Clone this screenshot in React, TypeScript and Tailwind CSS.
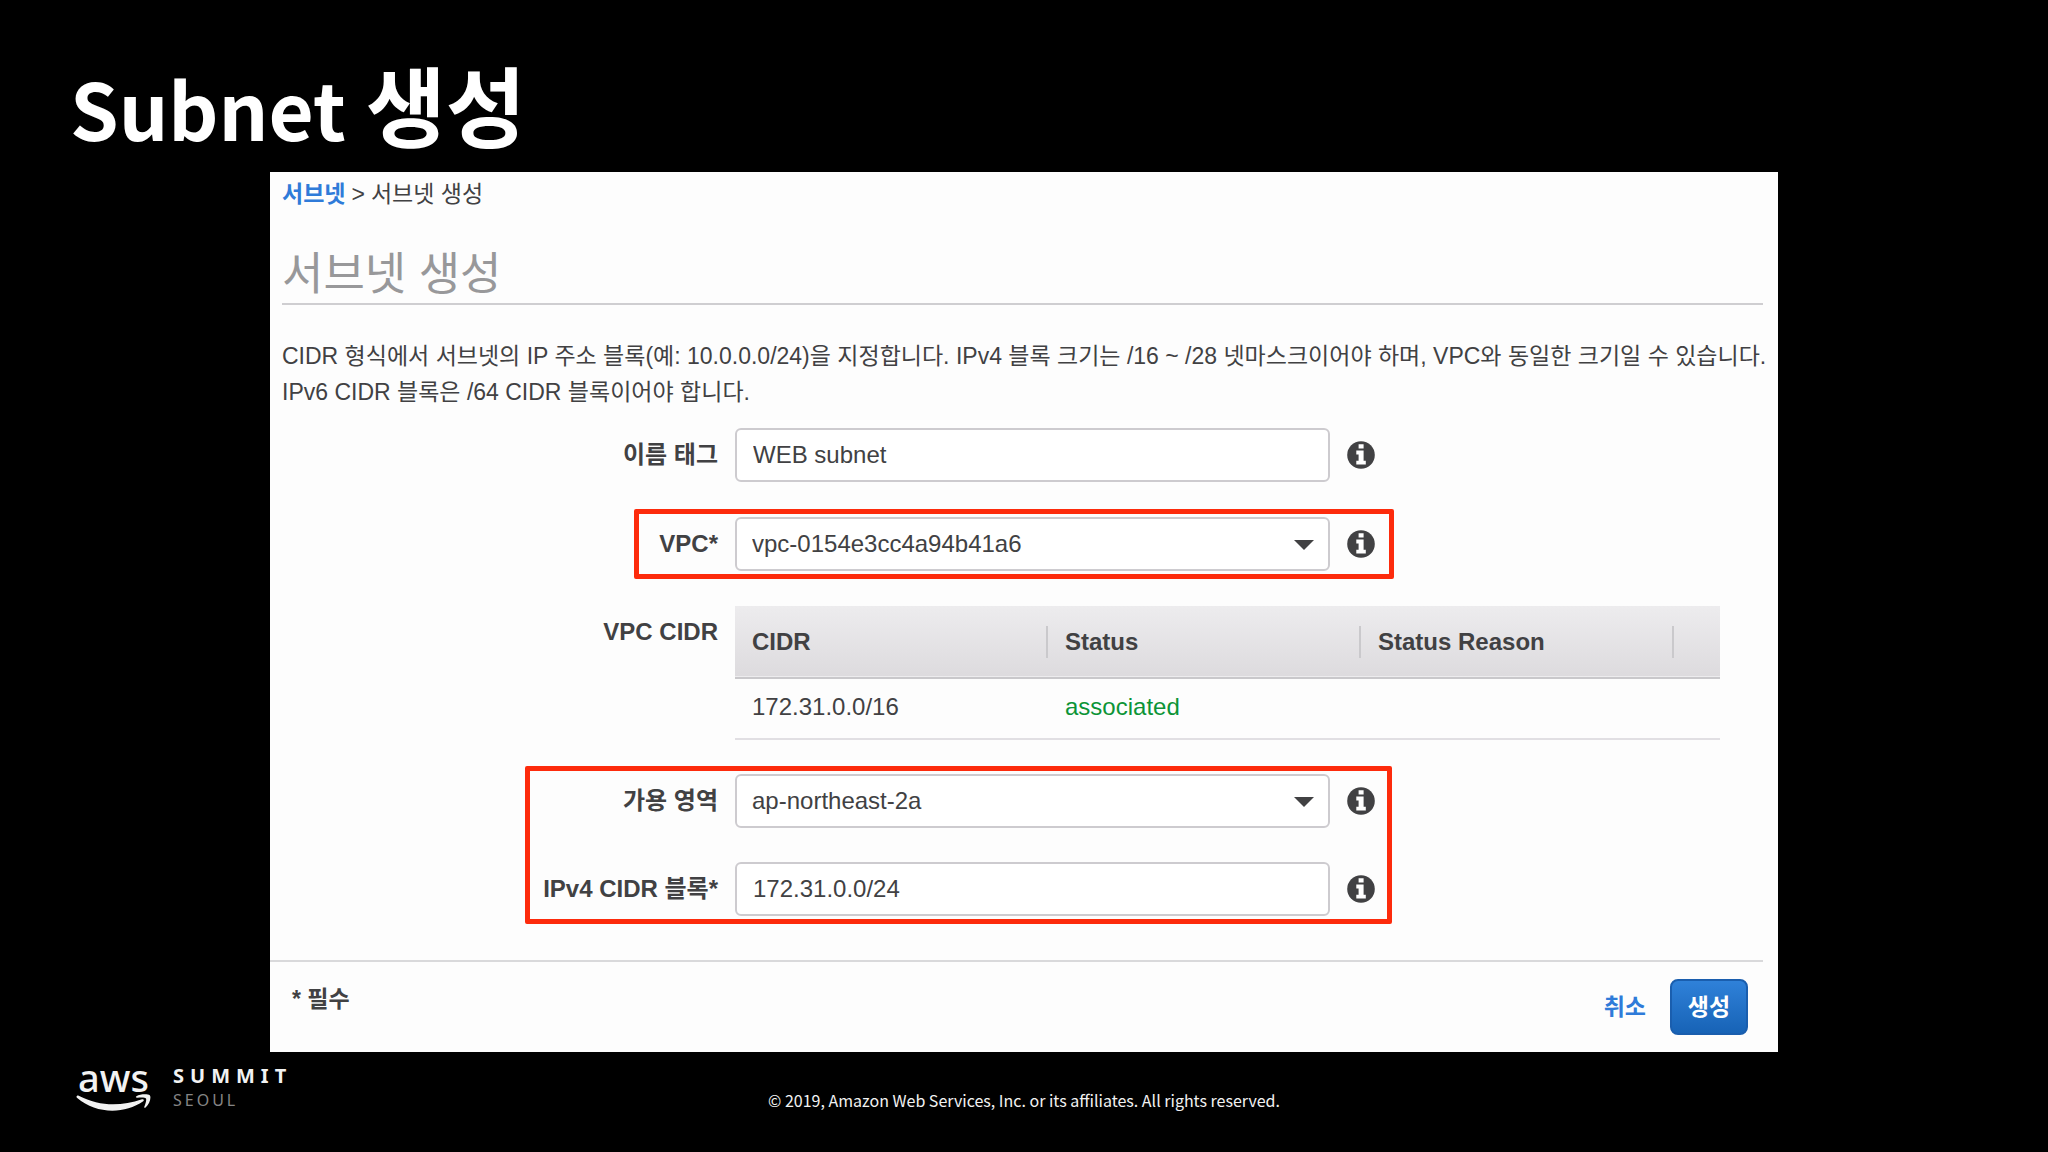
import { useState } from "react";
import type { ReactNode } from "react";

function InfoIcon() {
  return (
    <svg viewBox="0 0 28 28" className="size-7 shrink-0" aria-hidden="true">
      <circle cx="14" cy="14" r="13.8" fill="#414143" />
      <path
        fill="#fff"
        d="M11.6 3.2h5v4.2h-5zM9.3 9.6h7.3v10.2h2.2v3.6H9.3v-3.6h2.3v-6.4H9.3z"
      />
    </svg>
  );
}

type RowProps = {
  id: string;
  label: string;
  children: ReactNode;
};

function FormRow({ id, label, children }: RowProps) {
  return (
    <div className="flex h-[54px] items-center gap-[17px]">
      <label htmlFor={id} className="w-[448px] text-right font-bold">
        {label}
      </label>
      <div className="relative w-[595px]">{children}</div>
      <InfoIcon />
    </div>
  );
}

type FieldProps = {
  id: string;
  value: string;
};

function TextField({ id, value }: FieldProps) {
  const [text, setText] = useState(value);

  return (
    <input
      id={id}
      type="text"
      value={text}
      onChange={(e) => setText(e.target.value)}
      className="block h-[54px] w-full rounded-md border-2 border-[#cdcbcf] bg-white px-4 text-2xl"
    />
  );
}

function SelectField({ id, value }: FieldProps) {
  return (
    <>
      <select
        id={id}
        defaultValue={value}
        className="block h-[54px] w-full appearance-none rounded-md border-2 border-[#cdcbcf] bg-white px-[15px] text-2xl"
      >
        <option value={value}>{value}</option>
      </select>
      <svg
        viewBox="0 0 20 10"
        className="pointer-events-none absolute top-[23px] right-4 h-[10px] w-5"
        aria-hidden="true"
      >
        <path d="M0 0h20L10 10z" fill="#414143" />
      </svg>
    </>
  );
}

function HeaderCell({ children }: { children: ReactNode }) {
  return (
    <th className="p-0">
      <div className="flex h-8 items-center border-r-2 border-[#cac9cc] pl-[17px]">{children}</div>
    </th>
  );
}

function CidrTable() {
  return (
    <table className="w-full table-fixed border-collapse text-left">
      <thead>
        <tr className="h-[72px] border-b-2 border-[#c9c8cb] bg-linear-to-b from-[#edecee] to-[#dddbde]">
          <HeaderCell>CIDR</HeaderCell>
          <HeaderCell>Status</HeaderCell>
          <HeaderCell>Status Reason</HeaderCell>
          <th className="w-[46px] p-0"></th>
        </tr>
      </thead>
      <tbody>
        <tr className="h-[61px] border-b-2 border-[#e1dfe3]">
          <td className="pt-0 pb-1 pl-[17px]">172.31.0.0/16</td>
          <td className="pt-0 pb-1 pl-[17px] text-[#0c9437]">associated</td>
          <td></td>
          <td></td>
        </tr>
      </tbody>
    </table>
  );
}

function AwsLogo() {
  return (
    <div className="flex gap-[22px] text-[#f2f2f2]">
      <div className="w-[75px]">
        <div className="h-7 text-center font-['Noto_Sans'] text-[38px] leading-[22px] font-medium">aws</div>
        <svg viewBox="0 0 75 18" className="h-[18px] w-full" aria-hidden="true">
          <path
            fill="currentColor"
            d="M.6 2.2C.9 1.3 1.8 1.2 2.7 1.8 24 12.8 45 12.3 66 5.3c1.5-.6 2.5.9 1.2 2C48 20.500 20 20 1.200 4 .6 3.500.4 2.800.6 2.200z"
          />
          <path
            fill="currentColor"
            d="M60.5 2.3C64 .1 71.5-.2 73.8 1.3c1.7 2-.2 8.9-4.2 12.2-.8.7-1.7.3-1.3-.7 1.2-3 2.4-6.9 1.7-8.3-1.3-1.4-5.3-.9-8.7-.8-1.5.1-1.9-.8-.8-1.4z"
          />
        </svg>
      </div>
      <div className="font-['Noto_Sans']">
        <div className="text-xl leading-5 font-bold tracking-[6px]">SUMMIT</div>
        <div className="mt-1 text-base leading-5 tracking-[3px] text-[#858585]">SEOUL</div>
      </div>
    </div>
  );
}

export default function App() {
  return (
    <div className="flex min-h-screen flex-col bg-black">
      <h1 className="flex h-[172px] items-baseline gap-5 pt-[53px] pl-[70px] font-['Noto_Sans_CJK_KR',sans-serif] text-[78px] leading-[100px] font-bold text-white">
        <span>Subnet</span>
        <span className="text-[87px]">생성</span>
      </h1>

      <main className="mx-auto w-full max-w-[1508px] bg-[#fdfdfd] font-['Liberation_Sans','Noto_Sans_CJK_KR',sans-serif] text-2xl text-[#414143]">
        <div className="pr-[15px] pl-3">
          <nav className="flex h-11 items-center gap-1.5 text-[23px]">
            <a href="#subnets" className="font-bold text-[#2f7bd9]">
              서브넷
            </a>
            <span>&gt;</span>
            <span>서브넷 생성</span>
          </nav>

          <h2 className="mt-7 h-[61px] border-b-2 border-[#cfced1] text-[45px] leading-[62px] text-[#98989a]">
            서브넷 생성
          </h2>

          <p className="mt-[33px] -mr-2 text-[23px] leading-9">
            CIDR 형식에서 서브넷의 IP 주소 블록(예: 10.0.0.0/24)을 지정합니다. IPv4 블록 크기는 /16 ~ /28
            넷마스크이어야 하며, VPC와 동일한 크기일 수 있습니다.
            <br />
            IPv6 CIDR 블록은 /64 CIDR 블록이어야 합니다.
          </p>
        </div>

        <form className="mt-[18px]">
          <FormRow id="name-tag" label="이름 태그">
            <TextField id="name-tag" value="WEB subnet" />
          </FormRow>

          <div className="relative mt-[35px]">
            <FormRow id="vpc" label="VPC*">
              <SelectField id="vpc" value="vpc-0154e3cc4a94b41a6" />
            </FormRow>
            <div className="pointer-events-none absolute -inset-y-2 left-[364px] w-[760px] rounded-xs border-[5px] border-[#fd2b0c]" />
          </div>

          <div className="mt-[35px] flex gap-[17px] pr-[58px]">
            <div className="w-[448px] shrink-0 pt-[10px] text-right font-bold">VPC CIDR</div>
            <CidrTable />
          </div>

          <div className="relative mt-[34px] flex flex-col gap-[34px]">
            <FormRow id="zone" label="가용 영역">
              <SelectField id="zone" value="ap-northeast-2a" />
            </FormRow>
            <FormRow id="ipv4-cidr" label="IPv4 CIDR 블록*">
              <TextField id="ipv4-cidr" value="172.31.0.0/24" />
            </FormRow>
            <div className="pointer-events-none absolute -inset-y-2 left-[255px] w-[867px] rounded-xs border-[5px] border-[#fd2b0c]" />
          </div>

          <div className="mt-11 mr-[15px] border-t-2 border-[#d9d9db]" />

          <div className="flex h-[90px] items-center pr-[30px] pl-[22px] text-[23px] font-bold">
            <p className="-mt-4">* 필수</p>
            <button type="button" className="ml-auto text-[#2f7bd9]">
              취소
            </button>
            <button
              type="button"
              className="ml-6 h-14 w-[78px] rounded-lg border-2 border-[#1a5eae] bg-linear-to-b from-[#2f81d9] to-[#1763b6] text-white"
            >
              생성
            </button>
          </div>
        </form>
      </main>

      <footer className="grid grid-cols-[1fr_auto_1fr] pt-3.5">
        <div className="pl-[76px]">
          <AwsLogo />
        </div>
        <p className="pt-[22px] text-center font-['Noto_Sans_CJK_KR',sans-serif] text-base leading-6 text-[#f2f2f2]">
          © 2019, Amazon Web Services, Inc. or its affiliates. All rights reserved.
        </p>
      </footer>
    </div>
  );
}
